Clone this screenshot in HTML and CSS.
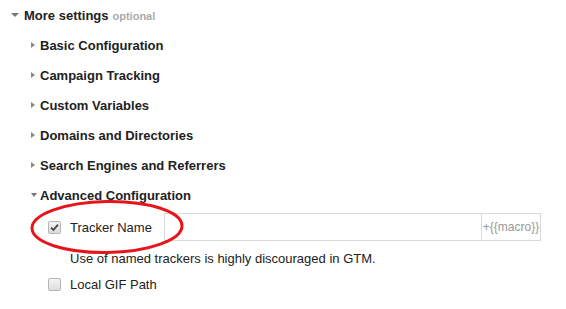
FILE: index.html
```html
<!DOCTYPE html>
<html>
<head>
<meta charset="utf-8">
<link rel="stylesheet" href="styles.css">
</head>
<body>
<div class="panel">
  <div class="head">
    <span class="tri-down"></span>
    <span class="title">More settings</span>
    <span class="opt">optional</span>
  </div>
  <ul class="groups">
    <li class="group"><span class="tri-right"></span>Basic Configuration</li>
    <li class="group"><span class="tri-right"></span>Campaign Tracking</li>
    <li class="group"><span class="tri-right"></span>Custom Variables</li>
    <li class="group"><span class="tri-right"></span>Domains and Directories</li>
    <li class="group"><span class="tri-right"></span>Search Engines and Referrers</li>
    <li class="group"><span class="tri-down small"></span>Advanced Configuration</li>
  </ul>
  <div class="fields">
    <div class="field">
      <span class="check checked">
        <svg width="9" height="9" viewBox="0 0 9 9"><path d="M1 4.6 L3.4 7 L8 1.6" fill="none" stroke="#444" stroke-width="1.8"/></svg>
      </span>
      <span class="label">Tracker Name</span>
      <div class="input-wrap">
        <div class="input"></div>
        <div class="macro">+{{macro}}</div>
      </div>
      <svg class="circle" width="160" height="60" viewBox="0 0 160 60"><ellipse cx="78" cy="28" rx="75" ry="25.5" fill="none" stroke="#e8141b" stroke-width="3" transform="rotate(-1 78 28)"/></svg>
    </div>
    <div class="help">Use of named trackers is highly discouraged in GTM.</div>
    <div class="field plain">
      <span class="check"></span>
      <span class="label">Local GIF Path</span>
    </div>
  </div>
</div>
</body>
</html>
```

FILE: styles.css
```css
html, body {
  margin: 0;
  padding: 0;
  background: #fff;
}
body {
  font-family: "Liberation Sans", Arial, sans-serif;
  color: #222;
  width: 566px;
  height: 309px;
  overflow: hidden;
}
.panel {
  padding: 0 0 0 11px;
}
.head {
  height: 30px;
  display: flex;
  align-items: center;
}
.tri-down {
  width: 0;
  height: 0;
  border-left: 4px solid transparent;
  border-right: 4px solid transparent;
  border-top: 4px solid #777;
  margin-right: 5px;
}
.tri-down.small {
  border-left-width: 3px;
  border-right-width: 3px;
  margin-left: 0;
  margin-right: 3px;
}
.title {
  font-size: 13px;
  font-weight: bold;
  color: #222;
}
.opt {
  font-size: 11px;
  font-weight: bold;
  color: #aaa;
  margin-left: 4px;
  margin-top: 1px;
}
.groups {
  list-style: none;
  margin: 0;
  padding: 0 0 0 20px;
}
.group {
  height: 30px;
  display: flex;
  align-items: center;
  font-size: 13px;
  font-weight: bold;
  color: #222;
}
.tri-right {
  width: 0;
  height: 0;
  border-top: 3.5px solid transparent;
  border-bottom: 3.5px solid transparent;
  border-left: 4px solid #888;
  margin-right: 5px;
}
.fields {
  padding: 3px 0 0 37px;
}
.field {
  position: relative;
  display: flex;
  align-items: center;
  height: 28px;
  font-size: 13px;
  color: #222;
}
.check {
  width: 11px;
  height: 11px;
  border: 1px solid #b5b5b5;
  border-radius: 2px;
  background: linear-gradient(#f4f4f4, #dcdcdc);
  display: flex;
  align-items: center;
  justify-content: center;
  flex: none;
}
.label {
  margin-left: 9px;
  width: 94px;
  flex: none;
}
.input-wrap {
  display: flex;
  height: 28px;
}
.input {
  width: 316px;
  height: 26px;
  border: 1px solid #d9d9d9;
  border-right: none;
}
.macro {
  width: 58px;
  height: 26px;
  border: 1px solid #d9d9d9;
  font-size: 12px;
  color: #999;
  display: flex;
  align-items: center;
  justify-content: center;
}
.circle {
  position: absolute;
  left: -19px;
  top: -14px;
}
.help {
  font-size: 13px;
  color: #222;
  padding-left: 22px;
  height: 36px;
  line-height: 36px;
}
.field.plain {
  height: 14px;
  margin-top: 0;
}
```
